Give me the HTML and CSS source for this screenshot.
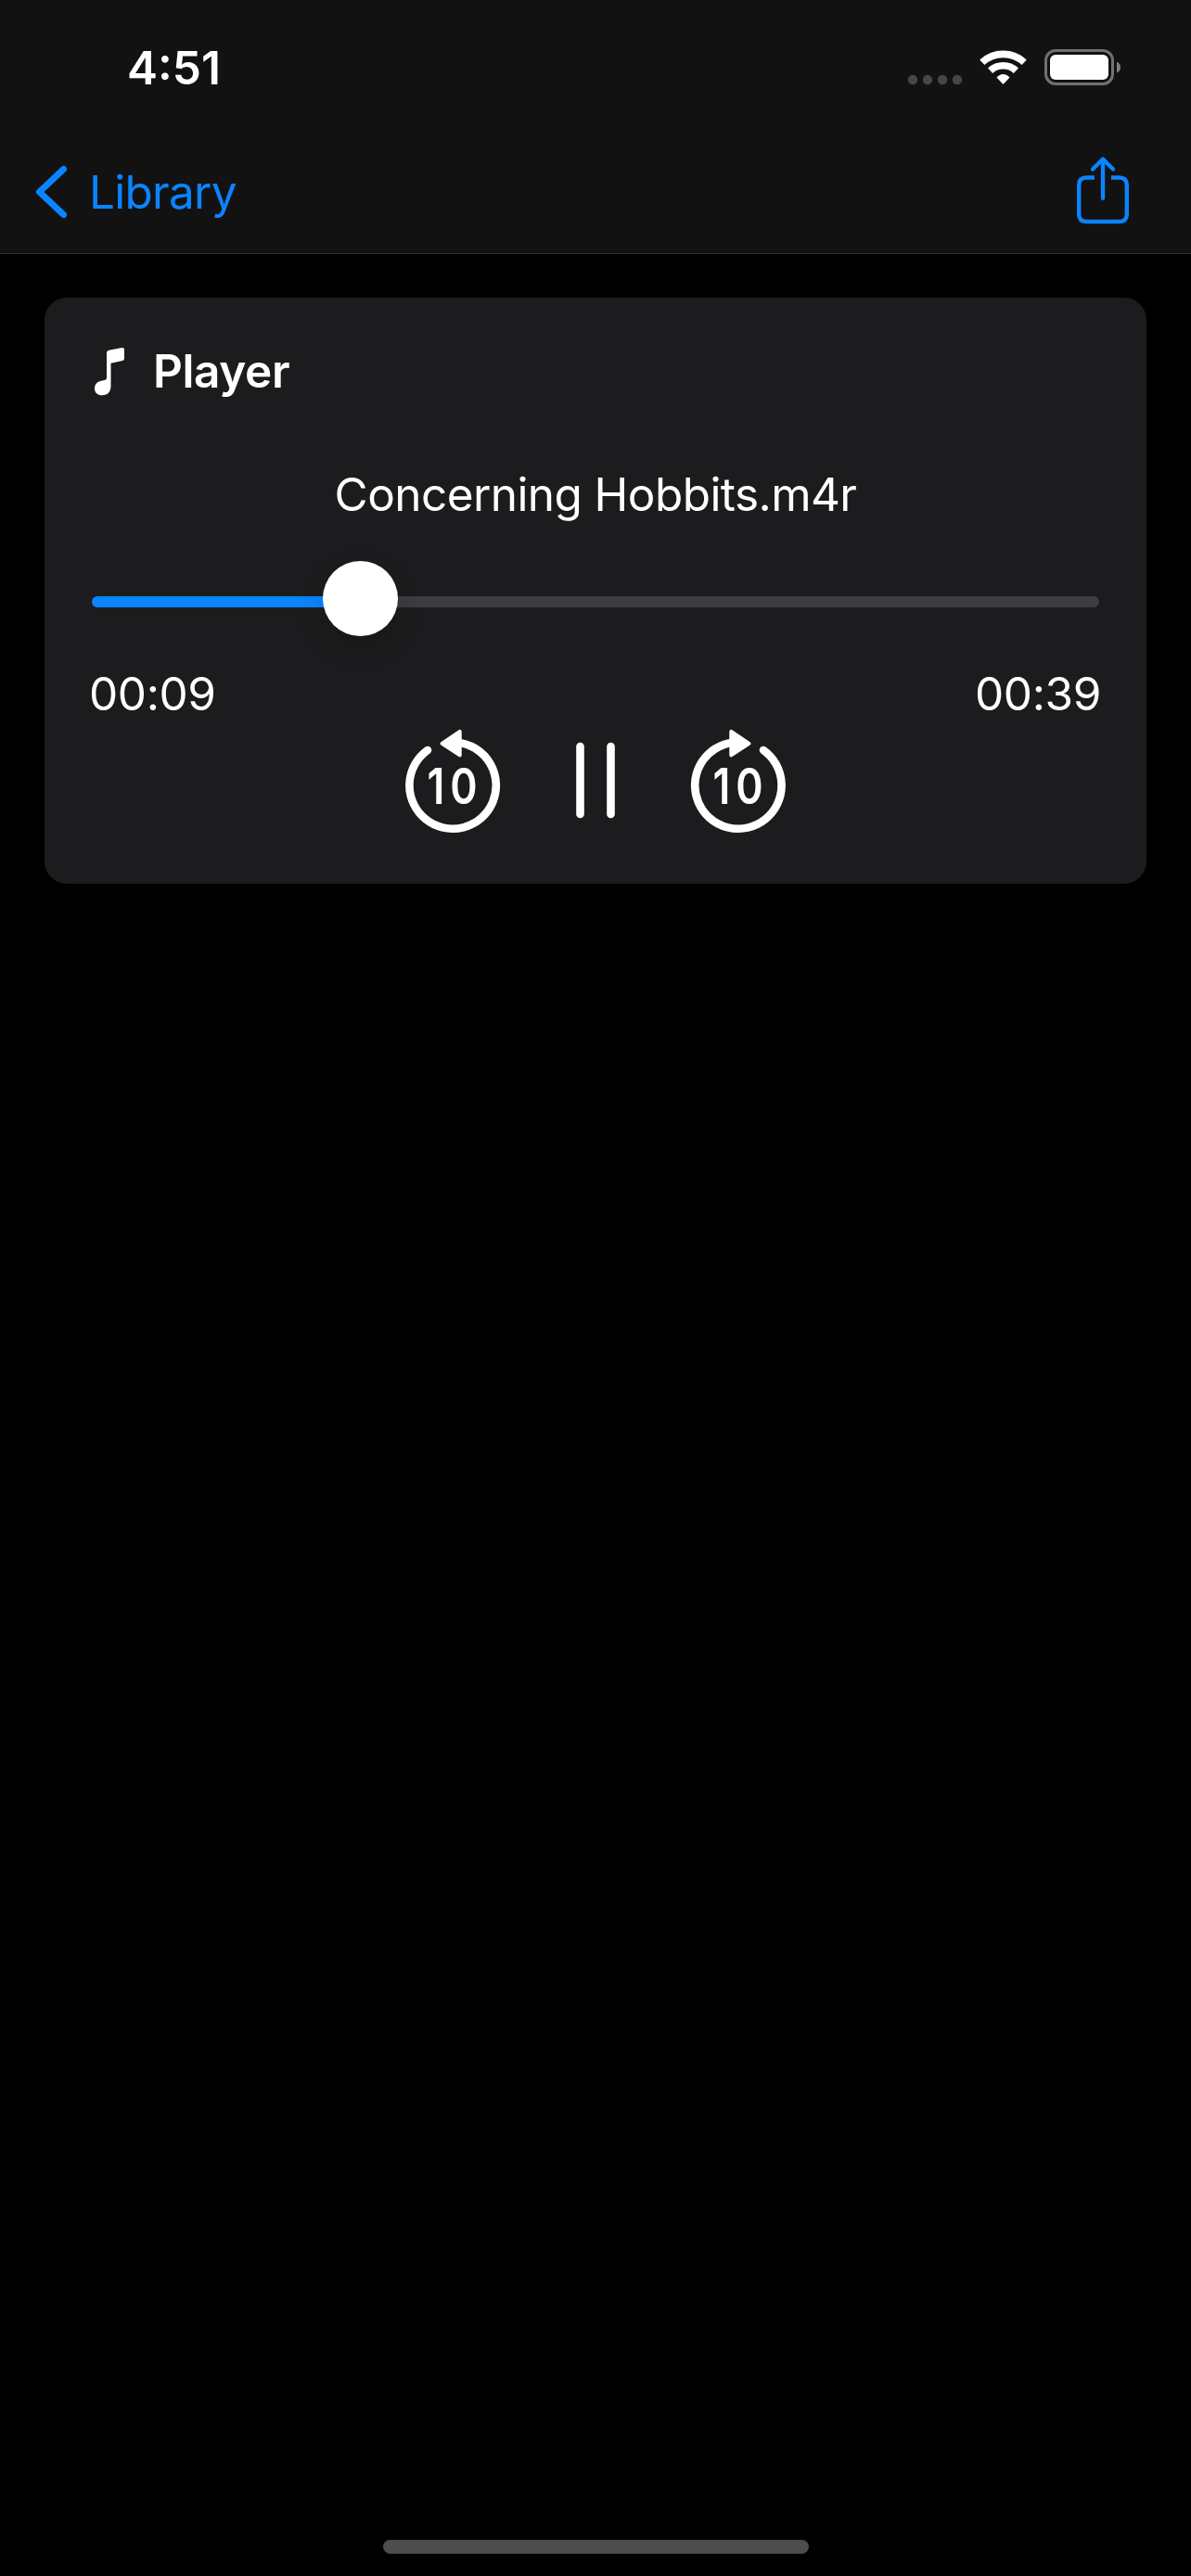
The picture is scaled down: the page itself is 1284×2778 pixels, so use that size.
FILE: index.html
```html
<!DOCTYPE html>
<html lang="en">
<head>
<meta charset="utf-8">
<title>Player</title>
<link rel="stylesheet" href="styles.css">
</head>
<body>
<header class="header">
  <div class="status">
    <span class="clock">4:51</span>
    <svg class="status-icons" width="232" height="44" viewBox="978 50 232 44">
      <g fill="#464646"><circle cx="984" cy="86" r="5.2"/><circle cx="1000" cy="86" r="5.2"/><circle cx="1016" cy="86" r="5.2"/><circle cx="1032" cy="86" r="5.2"/></g>
      <g fill="none" stroke="#fff" stroke-width="7.6">
        <path d="M1058.8 67.2A33.5 33.5 0 0 1 1104.2 67.2"/>
        <path d="M1067.6 76.2A20.5 20.5 0 0 1 1095.4 76.2"/>
      </g>
      <path d="M1074.5 83.6C1078.5 78.9 1084.500 78.900 1088.500 83.600L1082.200 90.300Q1081.500 91 1080.800 90.300Z" fill="#fff"/>
      <rect x="1127.500" y="54.500" width="72" height="36" rx="10.500" fill="none" stroke="#717171" stroke-width="3"/>
      <rect x="1132" y="59" width="63" height="27" rx="6" fill="#fff"/>
      <path d="M1204 66.500Q1208 68.500 1208 72.500T1204 78.500Z" fill="#808080"/>
    </svg>
  </div>
  <nav class="nav">
    <a class="back">
      <svg width="36" height="60" viewBox="38 177 36 60"><path d="M68.500 182.500L42.500 207L68.500 231.500" fill="none" stroke="#0a84ff" stroke-width="7" stroke-linecap="round" stroke-linejoin="round"/></svg>
      <span class="back-label">Library</span>
    </a>
    <svg width="60" height="76" viewBox="1159 167 60 76" fill="none" stroke="#0a84ff" stroke-width="4.400" stroke-linejoin="round">
      <path d="M1180 191.500H1171.500Q1163.200 191.500 1163.200 199.500V231Q1163.200 239 1171.500 239H1206.500Q1214.800 239 1214.800 231V199.500Q1214.800 191.500 1206.500 191.500H1198"/>
      <path d="M1189 171.500V213.800M1178 182.500L1189 171.500L1200 182.500" stroke-linecap="round"/>
    </svg>
  </nav>
</header>

<main class="card">
  <h1 class="card-head">
    <svg width="36" height="60" viewBox="100 370 36 60"><path d="M115 380.500Q115 378.300 117.200 377.700L131.300 375Q134 374.500 134 377V386.500Q134 388.500 132 389L119.500 391.800V416.500C119.500 422 116.500 426.300 109.800 426.300C105 426.300 102 423.200 102 419C102 414.500 104.800 411.800 109 410.800L113.300 409.700Q115 409.300 115 407.500Z" fill="#fff"/></svg>
    <span class="card-title">Player</span>
  </h1>
  <p class="track"><span class="track-name">Concerning Hobbits.m4r</span></p>
  <div class="slider">
    <div class="fill"></div>
    <div class="thumb"></div>
    <div class="rest"></div>
  </div>
  <div class="times"><span>00:09</span><span>00:39</span></div>
  <div class="controls">
    <svg width="104" height="114" viewBox="-52 -61 104 114">
      <path d="M-27 -38A46.700 46.700 0 1 0 6 -46.300" fill="none" stroke="#fff" stroke-width="8.600" stroke-linecap="round"/>
      <path d="M-11.500 -45.200L7.700 -58.200V-32.600Z" fill="#fff" stroke="#fff" stroke-width="4" stroke-linejoin="round"/>
      <text class="seconds" transform="scale(.84 1)" x="-21.500 14.300" y="20.300">10</text>
    </svg>
    <svg width="50" height="114" viewBox="-25 -61 50 114"><path d="M-16.500 -42V31M16.500 -42V31" stroke="#fff" stroke-width="8.600" stroke-linecap="round"/></svg>
    <svg width="104" height="114" viewBox="-52 -61 104 114">
      <path d="M27 -38A46.700 46.700 0 1 1 -6 -46.300" fill="none" stroke="#fff" stroke-width="8.600" stroke-linecap="round"/>
      <path d="M11.500 -45.200L-7.700 -58.200V-32.600Z" fill="#fff" stroke="#fff" stroke-width="4" stroke-linejoin="round"/>
      <text class="seconds" transform="scale(.84 1)" x="-21.500 14.300" y="20.300">10</text>
    </svg>
  </div>
</main>
<div class="home-bar"></div>
</body>
</html>
```
FILE: styles.css
```css
* { box-sizing: border-box; }

body {
  margin: 0;
  height: 2778px;
  display: flex;
  flex-direction: column;
  background: #000;
  color: #fff;
  font: 400 49.5px/60px Inter, "Liberation Sans", sans-serif;
}

svg { display: block; flex: none; }

.header {
  height: 274px;
  background: #121212;
  border-bottom: 1px solid #2b2b2c;
}

.status {
  display: flex;
  justify-content: space-between;
  height: 167px;
  padding: 43px 74px 0 137px;
}

.status-icons { margin-top: 7px; }

.clock { font-weight: 600; }

.nav {
  display: flex;
  justify-content: space-between;
  padding: 0 65px 0 38px;
}

.back {
  display: flex;
  gap: 22px;
  margin-top: 10px;
  color: #0a84ff;
}

.back-label { letter-spacing: -.75px; }

.card {
  margin: 47px 48px 0;
  height: 632px;
  padding: 49px 51px 0;
  border-radius: 24px;
  background: #1c1c1e;
}

.card-head {
  display: flex;
  gap: 29px;
  margin: 0 0 73px 1px;
  font: inherit;
  font-weight: 600;
  letter-spacing: -.4px;
}

.track {
  margin: 0 0 42px;
  text-align: center;
  letter-spacing: -.58px;
}

.slider {
  display: flex;
  align-items: center;
  height: 81px;
}

.fill, .rest { height: 12px; margin-top: 7px; }

.fill {
  width: 260px;
  margin-right: -11px;
  border-radius: 6px 0 0 6px;
  background: #0a84ff;
}

.thumb {
  z-index: 1;
  width: 81px;
  height: 81px;
  border-radius: 50%;
  background: #fff;
  box-shadow: 0 12px 30px rgba(0, 0, 0, .16);
}

.rest {
  flex: 1;
  margin-left: -11px;
  border-radius: 0 6px 6px 0;
  background: #3d3d41;
}

.times {
  display: flex;
  justify-content: space-between;
  margin: 32px -2px 0 -3px;
  letter-spacing: -.4px;
}

.controls {
  display: flex;
  justify-content: center;
  gap: 77px;
  margin-top: 8px;
}

.seconds {
  fill: #fff;
  font-size: 53px;
  font-weight: 600;
  text-anchor: middle;
}

.home-bar {
  width: 459px;
  height: 15px;
  margin: auto 0 24px 413px;
  border-radius: 8px;
  background: #4d4d4d;
}
```
